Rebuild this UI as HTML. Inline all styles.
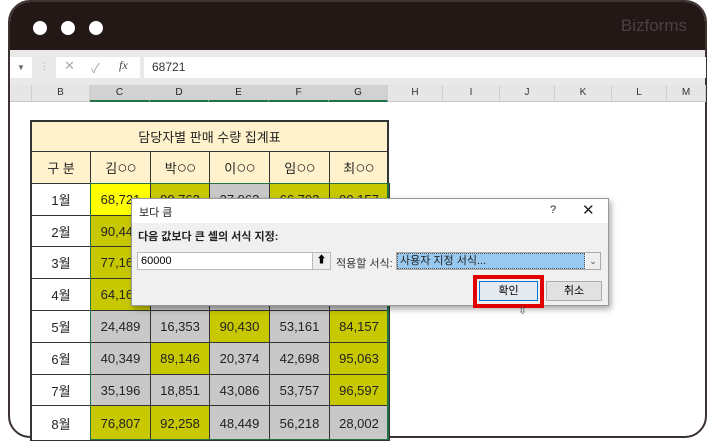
<!DOCTYPE html>
<html><head><meta charset="utf-8"><style>
*{margin:0;padding:0;box-sizing:border-box}
body{width:715px;height:440px;background:#fff;position:relative;overflow:hidden;font-family:"Liberation Sans","Noto Sans CJK KR",sans-serif}
.abs{position:absolute}
#frame{left:8px;top:0;width:699px;height:438px;border:2px solid #3a3330;border-radius:22px;overflow:hidden;background:#fff}
#title{left:0;top:0;width:100%;height:48px;background:#231815}
.dot{width:14px;height:14px;border-radius:50%;background:#fff;top:19px}
.ch{top:85px;height:17px;background:#e6e6e6;border-right:1px solid #d0d0d0;border-bottom:1px solid #c8c8c8;font-size:10px;color:#333;text-align:center;line-height:16px}
.ch.sel{background:#d2d2d2;border-bottom:2px solid #217346;color:#222}
.c{position:absolute;border:1px solid #333;font-size:13px;text-align:center;color:#222;display:flex;align-items:center;justify-content:center}
.o{font-size:17px;letter-spacing:-1px;line-height:1}
.y{background:#c8c800}.g{background:#c8c8c8}.w{background:#fff}.b{background:#ffff00}.h{background:#fff2cc}
</style></head><body>
<div id="frame" class="abs">
 <div id="title" class="abs"></div>
 <div class="abs dot" style="left:23px"></div>
 <div class="abs dot" style="left:51px"></div>
 <div class="abs dot" style="left:79px"></div>
 <div class="abs" style="right:18px;top:14px;color:#4a4240;font-size:17px">Bizforms</div>
 <div class="abs" style="left:0;top:48px;width:100%;height:37px;background:#e9e9e9"></div>
</div>
<div class="abs" style="left:10px;top:57px;width:22px;height:21px;background:#fff;font-size:8px;color:#666;text-align:center;line-height:21px">▼</div>
<div class="abs" style="left:40px;top:61px;font-size:9px;color:#aaa">⋮</div>
<div class="abs" style="left:56px;top:57px;width:84px;height:21px;background:#fff;font-size:13px;color:#aaa"><span style="position:absolute;left:8px;top:1px">✕</span><span style="position:absolute;left:35px;top:1px">✓</span><span style="position:absolute;left:63px;top:1px;font-family:'Liberation Serif';font-style:italic;color:#444;font-size:12px">fx</span></div>
<div class="abs" style="left:144px;top:57px;width:562px;height:21px;background:#fff;font-size:12px;color:#333;line-height:21px;padding-left:8px">68721</div>
<div class="abs ch" style="left:10px;width:22px"></div>
<div class="abs ch" style="left:32px;width:58px">B</div>
<div class="abs ch sel" style="left:90px;width:60px">C</div>
<div class="abs ch sel" style="left:150px;width:59px">D</div>
<div class="abs ch sel" style="left:209px;width:60px">E</div>
<div class="abs ch sel" style="left:269px;width:60px">F</div>
<div class="abs ch sel" style="left:329px;width:59px">G</div>
<div class="abs ch" style="left:388px;width:55px">H</div>
<div class="abs ch" style="left:443px;width:57px">I</div>
<div class="abs ch" style="left:500px;width:55px">J</div>
<div class="abs ch" style="left:555px;width:57px">K</div>
<div class="abs ch" style="left:612px;width:55px">L</div>
<div class="abs ch" style="left:667px;width:39px">M</div>
<div class="c h" style="left:30px;top:120px;width:359px;height:32px;border-width:2px 2px 1px 2px;font-size:13px">담당자별 판매 수량 집계표</div>
<div class="c h" style="left:30px;top:151px;width:61px;height:33px;border-left-width:2px;font-size:13px">구 분</div>
<div class="c h" style="left:90px;top:151px;width:61px;height:33px;font-size:13px">김<span class="o">○○</span></div>
<div class="c h" style="left:150px;top:151px;width:60px;height:33px;font-size:13px">박<span class="o">○○</span></div>
<div class="c h" style="left:209px;top:151px;width:61px;height:33px;font-size:13px">이<span class="o">○○</span></div>
<div class="c h" style="left:269px;top:151px;width:61px;height:33px;font-size:13px">임<span class="o">○○</span></div>
<div class="c h" style="left:329px;top:151px;width:60px;height:33px;border-right-width:2px;font-size:13px">최<span class="o">○○</span></div>
<div id="rows"></div>
<script>
var tops=[183,215,246,278,310,342,374,405,440];
var xs=[30,90,150,209,269,329,389];
var data=[
["1월",["b","68,721"],["y","90,762"],["g","37,962"],["y","66,703"],["y","90,157"]],
["2월",["y","90,443"],["g",""],["g",""],["g",""],["g",""]],
["3월",["y","77,160"],["g",""],["g",""],["g",""],["g",""]],
["4월",["y","64,160"],["g",""],["g",""],["g",""],["g",""]],
["5월",["g","24,489"],["g","16,353"],["y","90,430"],["g","53,161"],["y","84,157"]],
["6월",["g","40,349"],["y","89,146"],["g","20,374"],["g","42,698"],["y","95,063"]],
["7월",["g","35,196"],["g","18,851"],["g","43,086"],["g","53,757"],["y","96,597"]],
["8월",["y","76,807"],["y","92,258"],["g","48,449"],["g","56,218"],["g","28,002"]]];
var h="";
data.forEach(function(r,i){var t=tops[i],hh=tops[i+1]-t+1;
h+='<div class="c w" style="left:30px;top:'+t+'px;width:61px;height:'+hh+'px;border-left-width:2px">'+r[0]+'</div>';
for(var j=1;j<6;j++){h+='<div class="c '+r[j][0]+'" style="left:'+xs[j]+'px;top:'+t+'px;width:'+(xs[j+1]-xs[j]+1)+'px;height:'+hh+'px;'+(j==5?'border-right-width:2px;':'')+'">'+r[j][1]+'</div>';}
});
document.getElementById("rows").innerHTML=h;
</script>
<div class="abs" style="left:90px;top:183px;width:299px;height:257px;border:1px solid #217346;border-right-width:2px;pointer-events:none"></div>
<div class="abs" style="left:131px;top:198px;width:478px;height:108px;background:#f0f0f0;border:1px solid #999;box-shadow:2px 3px 6px rgba(0,0,0,.35)">
 <div class="abs" style="left:0;top:0;width:100%;height:24px;background:#fff;font-size:11px;color:#222">
  <span class="abs" style="left:7px;top:5px">보다 큼</span>
  <span class="abs" style="left:418px;top:5px">?</span>
  <span class="abs" style="left:450px;top:2px;font-size:15px">✕</span>
 </div>
 <div class="abs" style="left:6px;top:29px;font-size:11px;font-weight:bold;color:#222">다음 값보다 큰 셀의 서식 지정:</div>
 <div class="abs" style="left:5px;top:53px;width:194px;height:18px;background:#fff;border:1px solid #bbb;font-size:11px;line-height:16px;padding-left:3px">60000</div>
 <div class="abs" style="left:180px;top:54px;width:18px;height:16px;background:#eee;border-left:1px solid #bbb;font-size:10px;text-align:center;line-height:16px">⬆</div>
 <div class="abs" style="left:204px;top:56px;font-size:11px;color:#333">적용할 서식:</div>
 <div class="abs" style="left:264px;top:53px;width:205px;height:18px;background:#fff;border:1px solid #aaa"></div>
 <div class="abs" style="left:265px;top:54px;width:188px;height:16px;background:#99c9ef;border:1px dotted #555;font-size:11px;line-height:14px;padding-left:2px;color:#222">사용자 지정 서식...</div>
 <div class="abs" style="left:454px;top:54px;width:14px;height:16px;background:#eee;font-size:9px;text-align:center;line-height:16px;color:#555">⌄</div>
 <div class="abs" style="left:341px;top:76px;width:71px;height:33px;border:4px solid #e00000"></div>
 <div class="abs" style="left:347px;top:82px;width:59px;height:20px;background:#e5eaf0;border:1px solid #0078d7;font-size:11px;text-align:center;line-height:18px">확인</div>
 <div class="abs" style="left:414px;top:82px;width:56px;height:20px;background:#e1e1e1;border:1px solid #adadad;font-size:11px;text-align:center;line-height:18px">취소</div>
</div>
<div class="abs" style="left:518px;top:304px;font-size:11px;color:#555">⇳</div>
</body></html>
